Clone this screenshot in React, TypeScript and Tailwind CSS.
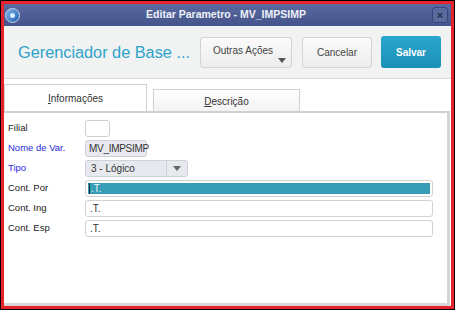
const FONT = { fontFamily: '"Liberation Sans", Arial, sans-serif' };

function FieldRow({
  label,
  blue,
  children,
}: {
  label: string;
  blue?: boolean;
  children: React.ReactNode;
}) {
  return (
    <div className="flex h-[17px] items-center">
      <span
        className={`w-[77px] shrink-0 text-[9.5px] ${blue ? "text-[#2b2bdc]" : "text-[#222]"}`}
      >
        {label}
      </span>
      {children}
    </div>
  );
}

export default function App() {
  return (
    <div className="h-[310px] w-[455px] border border-black bg-black" style={FONT}>
      <div className="flex h-full flex-col border-[3px] border-[#e8222b] bg-white">
        {/* title bar */}
        <div className="flex h-[22px] shrink-0 items-center bg-gradient-to-b from-[#5a6aa0] to-[#44548b] px-[1px]">
          <div className="flex h-[15px] w-[15px] items-center justify-center rounded-full border border-[#c7d3ea] bg-gradient-to-br from-[#7fb6ea] to-[#1f5fae]">
            <div className="h-[5px] w-[5px] rounded-full bg-[#d8ecff]" />
          </div>
          <div className="flex-1 text-center text-[10.5px] font-bold text-[#eef1f8]">
            Editar Parametro - MV_IMPSIMP
          </div>
          <div className="mr-[2px] flex h-[16px] w-[16px] items-center justify-center rounded-[3px] border border-[#36447a] bg-[#5b6ba0] text-[11px] font-bold leading-none text-[#2a2f45]">
            ×
          </div>
        </div>

        {/* header */}
        <div className="flex h-[53px] shrink-0 items-center border-b border-[#dcdcdc] bg-[#f1f2f2] pl-[14px] pr-[10px]">
          <div className="flex-1 text-[16.3px] text-[#2ba3cb]">Gerenciador de Base ...</div>
          <div className="relative mr-[10px] flex h-[31px] w-[92px] items-center justify-center rounded-[3px] border border-[#d4d4d4] bg-gradient-to-b from-[#fbfbfb] to-[#ececec] pb-[3px] pr-[6px] text-[10px] text-[#444]">
            Outras Ações
            <svg className="absolute bottom-[4px] right-[5px]" width="8" height="5" viewBox="0 0 8 5">
              <path d="M0 0H8L4 5Z" fill="#555" />
            </svg>
          </div>
          <div className="mr-[9px] flex h-[31px] w-[70px] items-center justify-center rounded-[3px] border border-[#d4d4d4] bg-gradient-to-b from-[#fbfbfb] to-[#ececec] text-[10px] text-[#444]">
            Cancelar
          </div>
          <div className="flex h-[32px] w-[60px] items-center justify-center rounded-[3px] bg-gradient-to-b from-[#2ba7cf] to-[#1a8fb6] text-[10px] font-bold text-white">
            Salvar
          </div>
        </div>

        {/* tabs */}
        <div className="flex h-[32px] shrink-0 items-end gap-[6px] bg-white">
          <div className="flex h-[27px] w-[143px] items-center justify-center border border-b-0 border-[#cfcfcf] bg-white text-[10px] text-[#333]">
            <span>
              <span className="underline">I</span>nformações
            </span>
          </div>
          <div className="flex h-[22px] w-[147px] items-center justify-center border border-b-0 border-[#cfcfcf] bg-gradient-to-b from-white to-[#f3f3f3] pt-[2px] text-[10px] text-[#333]">
            <span>
              <span className="underline">D</span>escrição
            </span>
          </div>
        </div>

        {/* content */}
        <div className="mr-[1px] flex flex-1 flex-col gap-[3px] border-r-[3px] border-b-[3px] border-t-2 border-[#d6d6d6] border-t-[#d0d0d0] bg-white pl-[4px] pt-[7px]">
          <FieldRow label="Filial">
            <div className="h-[17px] w-[25px] rounded-[3px] border border-[#cfcfcf] bg-white" />
          </FieldRow>
          <FieldRow label="Nome de Var." blue>
            <div className="flex h-[17px] w-[62px] items-center rounded-[3px] border border-[#cfd2d8] bg-[#e8eaef] px-[3px] text-[10px] tracking-[-0.3px] text-[#333]">
              MV_IMPSIMP
            </div>
          </FieldRow>
          <FieldRow label="Tipo" blue>
            <div className="flex h-[17px] w-[103px] items-center rounded-[3px] border border-[#cfd2d8] bg-[#e6e9ee] text-[10px] text-[#333]">
              <span className="flex-1 px-[5px]">3 - Lógico</span>
              <div className="flex h-full w-[21px] items-center justify-center border-l border-[#cfd2d8]">
                <svg width="8" height="5" viewBox="0 0 8 5">
                  <path d="M0 0H8L4 5Z" fill="#666" />
                </svg>
              </div>
            </div>
          </FieldRow>
          <FieldRow label="Cont. Por">
            <div className="flex h-[17px] w-[348px] rounded-[3px] border border-[#d2d2d2] bg-white p-[2px]">
              <div className="flex flex-1 items-center bg-[#379db7] pl-[1px] text-[10px] text-[#eef7fa]">
                <span className="mr-px h-[11px] w-px bg-[#1a2a30]" />
                .T.
              </div>
            </div>
          </FieldRow>
          <FieldRow label="Cont. Ing">
            <div className="flex h-[17px] w-[348px] items-center rounded-[3px] border border-[#d2d2d2] bg-white px-[4px] text-[10px] text-[#333]">
              .T.
            </div>
          </FieldRow>
          <FieldRow label="Cont. Esp">
            <div className="flex h-[17px] w-[348px] items-center rounded-[3px] border border-[#d2d2d2] bg-white px-[4px] text-[10px] text-[#333]">
              .T.
            </div>
          </FieldRow>
        </div>
      </div>
    </div>
  );
}
